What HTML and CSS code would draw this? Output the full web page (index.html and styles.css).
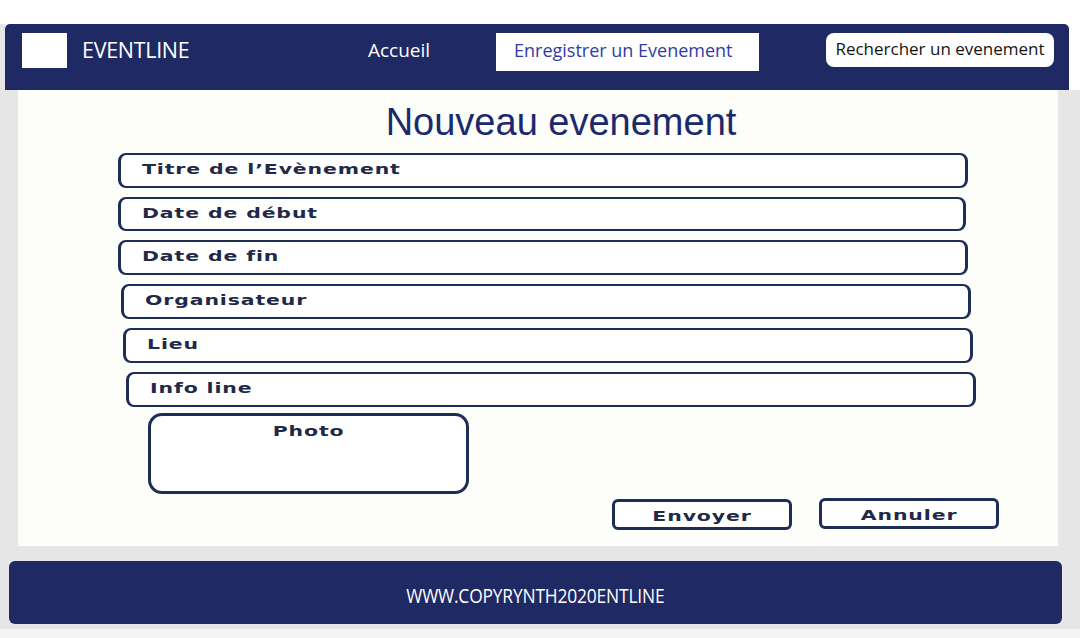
FILE: index.html
```html
<!DOCTYPE html>
<html lang="fr">
<head>
<meta charset="utf-8">
<title>EVENTLINE - Nouveau evenement</title>
<link rel="stylesheet" href="styles.css">
</head>
<body>
<div class="shell">
  <div class="head-row">
    <header class="header">
      <div class="logo"></div>
      <div class="brand">EVENTLINE</div>
      <a class="nav-link">Accueil</a>
      <a class="nav-active">Enregistrer un Evenement</a>
      <a class="nav-search">Rechercher un evenement</a>
    </header>
  </div>
  <div class="content">
    <main class="card">
      <h1 class="title">Nouveau evenement</h1>
      <form class="form">
        <div class="field"><span class="lbl">Titre de l’Evènement</span></div>
        <div class="field field-b"><span class="lbl">Date de début</span></div>
        <div class="field"><span class="lbl">Date de fin</span></div>
        <div class="field field-i1"><span class="lbl">Organisateur</span></div>
        <div class="field field-i2"><span class="lbl">Lieu</span></div>
        <div class="field field-i3"><span class="lbl">Info line</span></div>
        <div class="photo"><span class="lbl lbl-c">Photo</span></div>
        <div class="actions">
          <div class="btn"><span class="lbl lbl-c">Envoyer</span></div>
          <div class="btn btn-up"><span class="lbl lbl-c">Annuler</span></div>
        </div>
      </form>
    </main>
    <footer class="footer"><span class="footer-text">WWW.COPYRYNTH2020ENTLINE</span></footer>
  </div>
</div>
</body>
</html>
```
FILE: styles.css
```css
* { box-sizing: border-box; }
html, body { margin: 0; padding: 0; }
body {
  background: #f4f4f4;
  font-family: "Open Sans", "Noto Sans", sans-serif;
  width: 1080px;
  height: 638px;
  overflow: hidden;
}
.shell {
  padding-top: 24px;
  background: #ffffff;
}
.head-row {
  display: flex;
  background: #ffffff;
  border-left: 5px solid #e6e6e6;
}
.header {
  width: 1064px;
  height: 66px;
  background: #1f2964;
  border-radius: 5px 5px 0 0;
  display: flex;
  align-items: flex-start;
  padding: 9px 0 0 17px;
}
.header > * { flex: none; }
.logo {
  width: 45px;
  height: 35px;
  background: #ffffff;
}
.brand {
  margin-left: 15px;
  width: 107px;
  color: #ffffff;
  font-size: 21.5px;
  line-height: 34px;
  letter-spacing: -0.3px;
}
.nav-link {
  margin-left: 179px;
  width: 62px;
  color: #ffffff;
  font-size: 19px;
  line-height: 34px;
}
.nav-active {
  margin-left: 66px;
  width: 263px;
  height: 38px;
  background: #ffffff;
  color: #2f3da3;
  font-size: 18px;
  line-height: 35px;
  padding-left: 18px;
}
.nav-search {
  margin-left: 67px;
  width: 228px;
  height: 34px;
  background: #ffffff;
  color: #141414;
  font-size: 17px;
  line-height: 32px;
  border-radius: 8px;
  text-align: center;
}
.content {
  background: #e6e6e6;
  padding-bottom: 5px;
  display: flex;
  flex-direction: column;
}
.card {
  margin-left: 18px;
  width: 1040px;
  height: 456px;
  background: #fdfdfa;
  padding-top: 10px;
  padding-left: 100px;
}
.title {
  margin: 0 0 9px 0;
  width: 886px;
  text-align: center;
  font-family: "Liberation Sans", Arial, sans-serif;
  font-weight: normal;
  font-size: 38px;
  line-height: 44px;
  color: #1a2a6c;
}
.form {
  display: flex;
  flex-direction: column;
  align-items: flex-start;
}
.field {
  width: 850px;
  height: 35px;
  margin-bottom: 9px;
  background: #ffffff;
  border: 2px solid #1e2d56;
  border-left-width: 3px;
  border-right-width: 3px;
  border-radius: 8px;
  padding: 2px 0 0 21px;
}
.field-b { width: 848px; height: 34px; }
.field-i1 { margin-left: 3px; }
.field-i2 { margin-left: 5px; }
.field-i3 { margin-left: 8px; margin-bottom: 6px; }
.lbl {
  display: inline-block;
  font-family: "DejaVu Sans", Verdana, sans-serif;
  font-weight: bold;
  font-size: 14px;
  line-height: 16px;
  letter-spacing: 0.6px;
  color: #1f2a48;
  transform: scaleX(1.46);
  transform-origin: left center;
  white-space: nowrap;
}
.lbl-c { transform-origin: center center; }
.photo {
  margin-left: 30px;
  width: 321px;
  height: 81px;
  background: #ffffff;
  border: 3px solid #1e2d56;
  border-radius: 14px;
  text-align: center;
  padding-top: 3px;
}
.actions {
  display: flex;
  gap: 27px;
  margin-left: 494px;
  margin-top: 4px;
  align-items: flex-start;
}
.btn {
  width: 180px;
  height: 31px;
  background: #ffffff;
  border: 3px solid #1e2d56;
  border-radius: 6px;
  text-align: center;
  padding-top: 2px;
  margin-top: 1px;
}
.btn-up { margin-top: 0; }
.footer {
  margin-top: 15px;
  margin-left: 9px;
  width: 1053px;
  height: 63px;
  background: #1f2964;
  border-radius: 6px;
  display: flex;
  justify-content: center;
  align-items: center;
  padding-top: 7px;
}
.footer-text {
  display: inline-block;
  color: #ffffff;
  font-family: "Open Sans", sans-serif;
  font-size: 20px;
  line-height: 24px;
  letter-spacing: -0.2px;
  transform: scaleX(0.87);
}
```
